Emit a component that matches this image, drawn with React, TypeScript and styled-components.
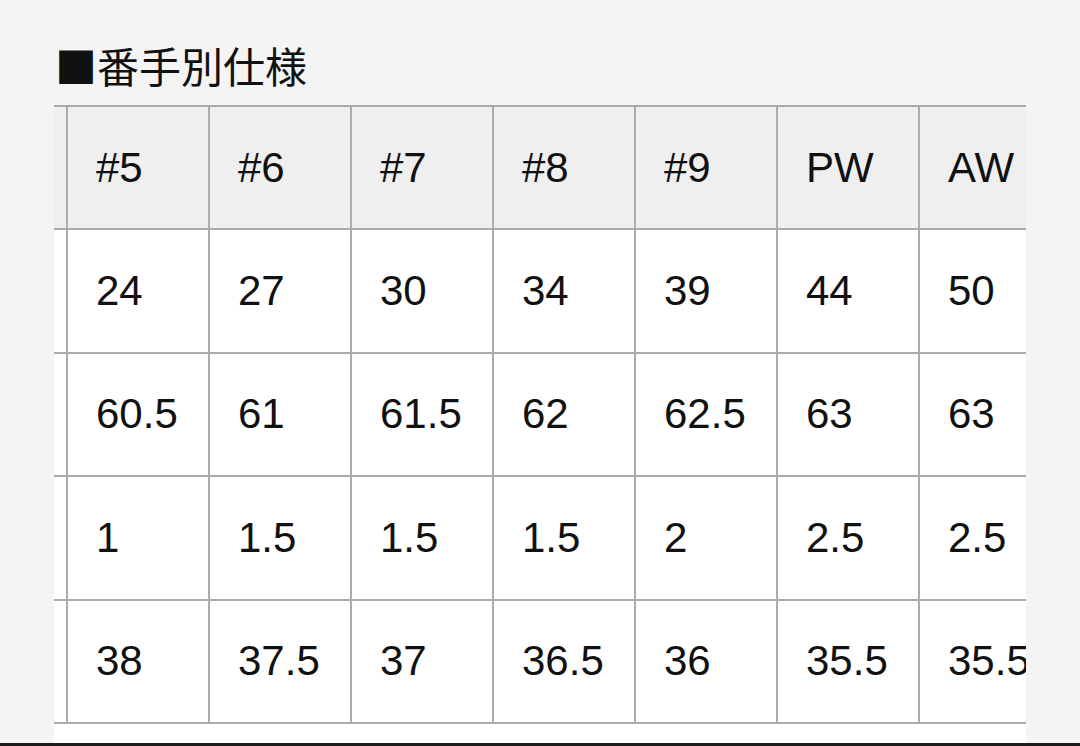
import styled, { createGlobalStyle } from 'styled-components';

const GlobalStyle = createGlobalStyle`
  html, body {
    margin: 0;
    padding: 0;
    background: #f4f4f4;
    overflow: hidden;
  }
`;

const heads = ['#5', '#6', '#7', '#8', '#9', 'PW', 'AW'];
const rows = [
  ['24', '27', '30', '34', '39', '44', '50'],
  ['60.5', '61', '61.5', '62', '62.5', '63', '63'],
  ['1', '1.5', '1.5', '1.5', '2', '2.5', '2.5'],
  ['38', '37.5', '37', '36.5', '36', '35.5', '35.5'],
];

export default function App() {
  return (
    <Page>
      <GlobalStyle />
      <Title>■番手別仕様</Title>
      <ScrollBox>
        <Grid $cols={heads.length}>
          <Stub $head />
          {heads.map((h, i) => (
            <Cell key={'h' + i} $head>{h}</Cell>
          ))}
          {rows.map((r, ri) => [
            <Stub key={'s' + ri} />,
            ...r.map((v, ci) => <Cell key={ri + '-' + ci}>{v}</Cell>),
          ])}
        </Grid>
      </ScrollBox>
      <BottomBar />
    </Page>
  );
}

const Page = styled.div`
  display: flex;
  flex-direction: column;
  height: 746px;
`;

const Title = styled.h2`
  margin: 0;
  padding: 40px 0 0 55px;
  height: 105px;
  box-sizing: border-box;
  font-family: "Noto Sans CJK JP", sans-serif;
  font-weight: 400;
  font-size: 42px;
  line-height: 50px;
  color: #111;
  white-space: nowrap;
`;

const ScrollBox = styled.div`
  margin-left: 54px;
  width: 972px;
  overflow: hidden;
  background: #fff;
  border-top: 2px solid #ababab;
  padding-bottom: 19px;
`;

const Grid = styled.div<{ $cols: number }>`
  display: grid;
  grid-template-columns: 14px repeat(${p => p.$cols}, 142px);
  width: max-content;
`;

const Cell = styled.div<{ $head?: boolean }>`
  box-sizing: border-box;
  height: 123.4px;
  display: flex;
  align-items: center;
  padding-left: 28px;
  border-right: 2px solid #ababab;
  border-bottom: 2px solid #ababab;
  background: ${p => (p.$head ? '#efefef' : '#fff')};
  font-family: "Liberation Sans", Arial, sans-serif;
  font-size: 42px;
  color: #111;
  white-space: nowrap;
`;

const Stub = styled(Cell)`
  padding: 0;
`;

const BottomBar = styled.div`
  flex: 1;
  background: #1c1c1c;
`;
